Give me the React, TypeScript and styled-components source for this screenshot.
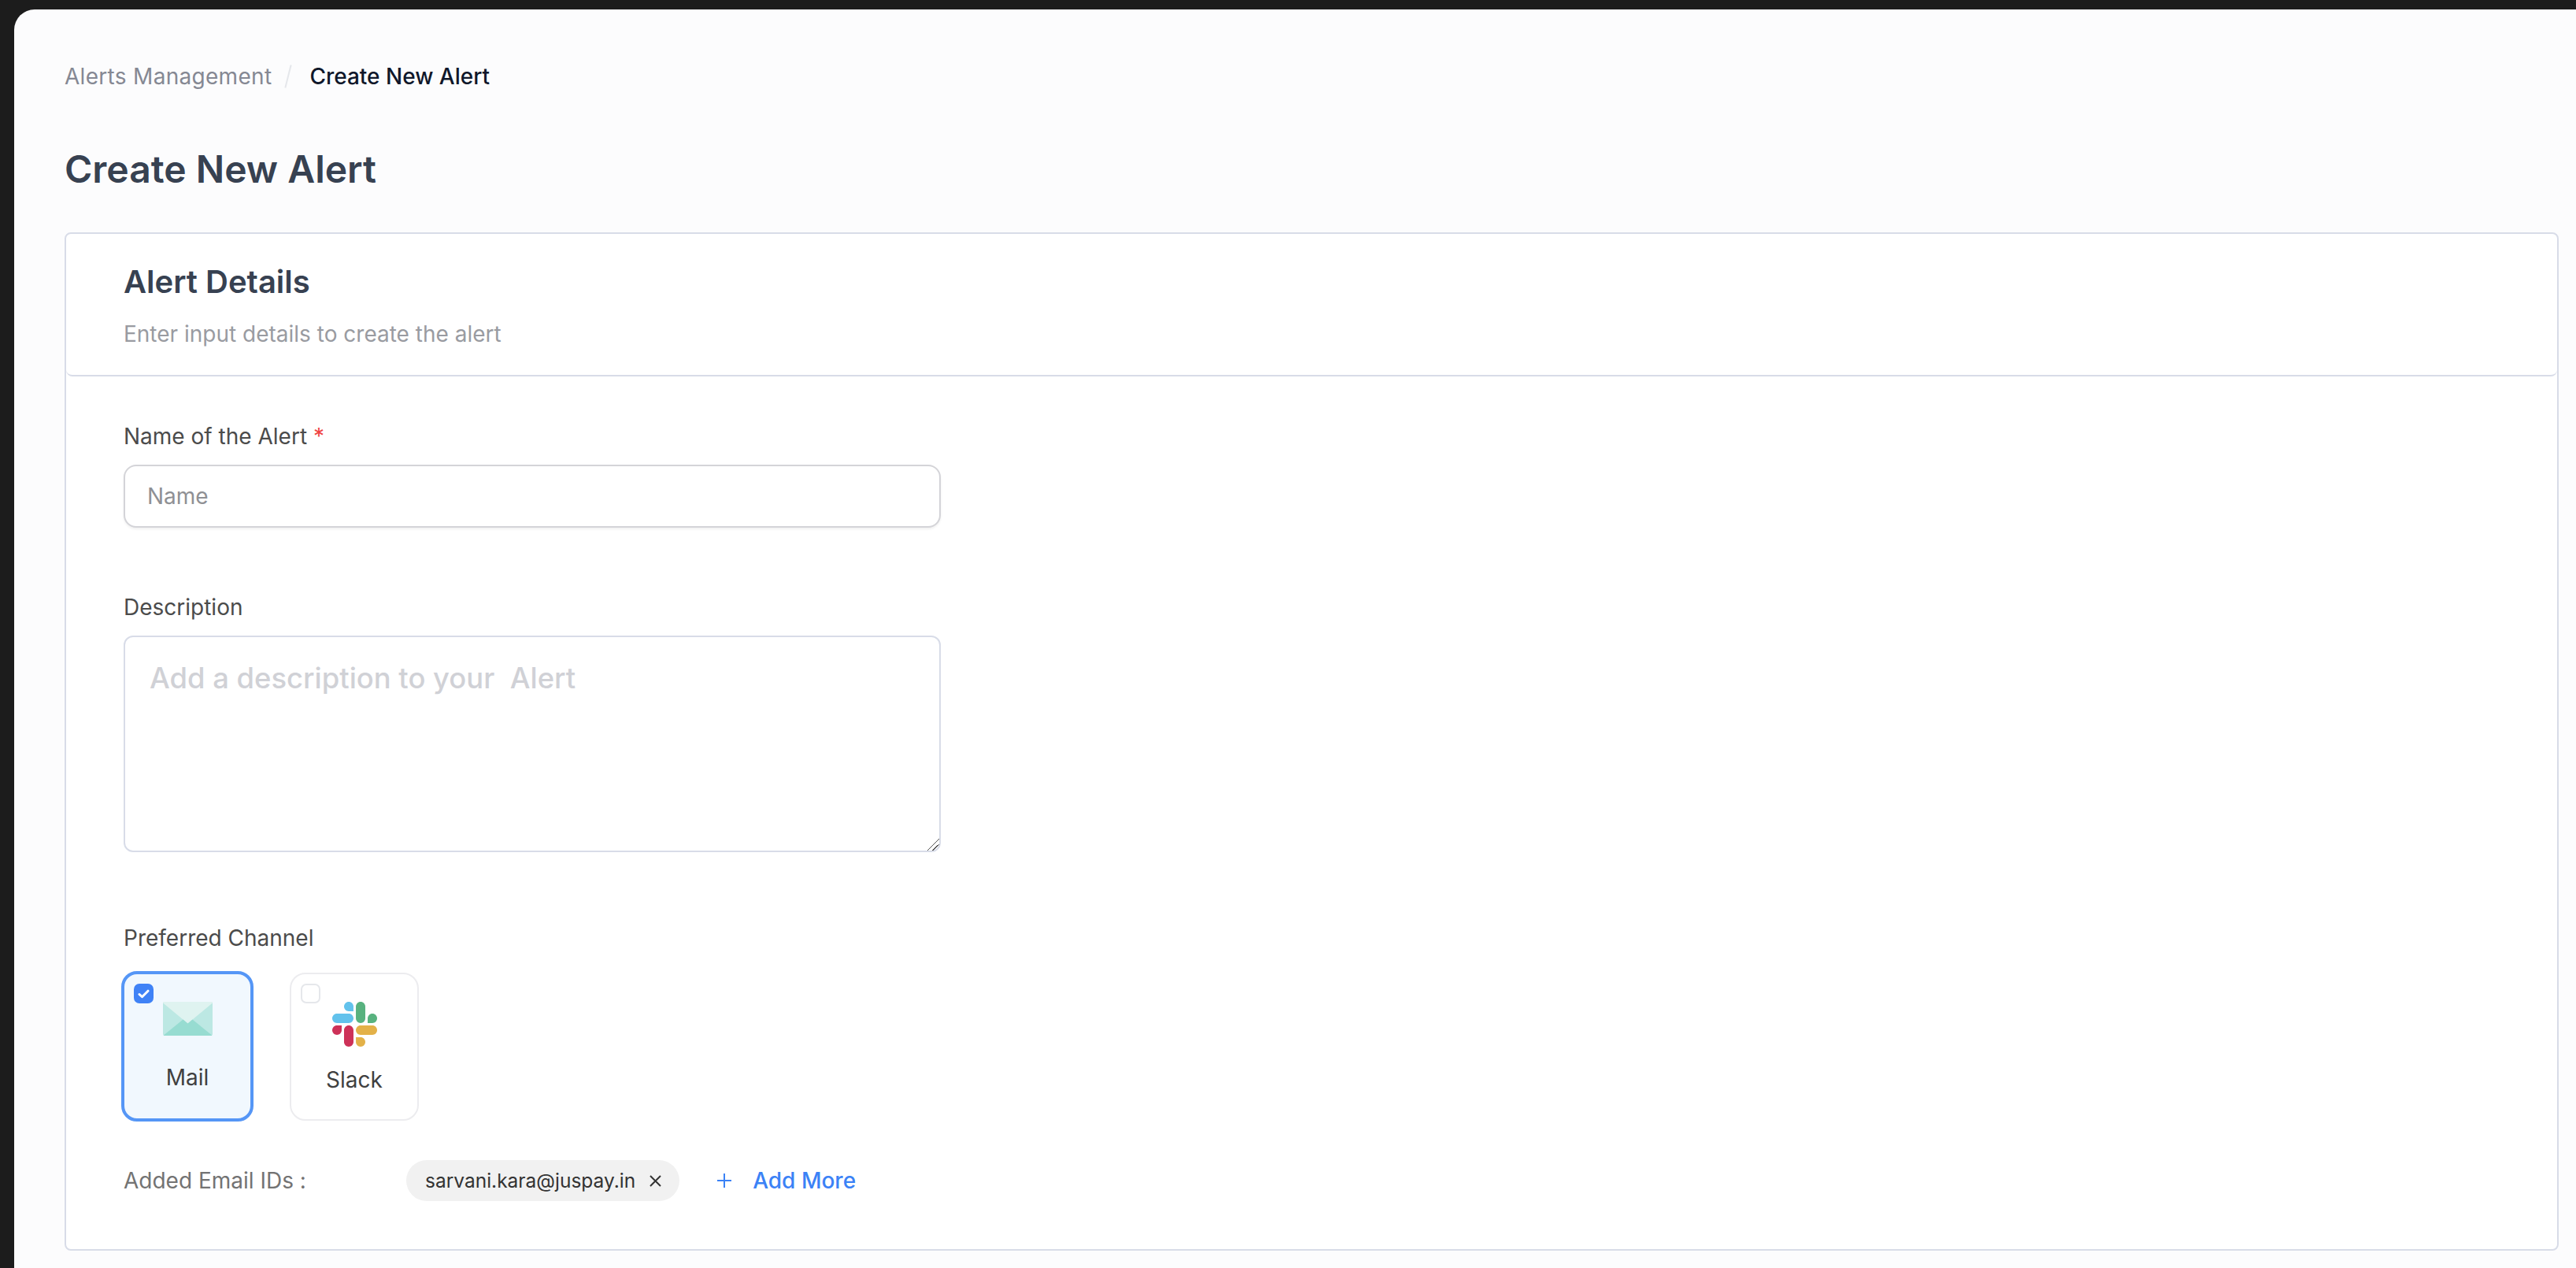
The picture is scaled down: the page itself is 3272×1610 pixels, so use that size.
import { createGlobalStyle, styled } from "styled-components";

const GlobalStyle = createGlobalStyle`
  html, body {
    margin: 0;
    padding: 0;
    background: #1c1c1c;
    font-family: Inter, "Noto Sans", sans-serif;
  }
  * {
    box-sizing: border-box;
  }
`;

const MailIcon = () => (
  <svg width="63" height="43" viewBox="0 0 63 43">
    <rect width="63" height="43" rx="2" fill="#bce8e3" />
    <path d="M1 0h61a1 1 0 0 1 .6 1.8L31.5 27.500 .4 1.800A1 1 0 0 1 1 0z" fill="#dff3f0" />
    <path d="M31.500 27.500l-6-5L.8 42.400c.3.400.7.600 1.200.600h59c.5 0 .9-.2 1.200-.6L37.500 22.500z" fill="#97dcd1" />
  </svg>
);

const SlackIcon = () => (
  <svg width="57" height="57" viewBox="0 0 122.800 122.800">
    <path d="M25.800 77.600c0 7.100-5.800 12.900-12.900 12.900S0 84.700 0 77.600s5.800-12.900 12.900-12.900h12.900v12.900z" fill="#cd3158" />
    <path d="M32.300 77.600c0-7.100 5.800-12.900 12.900-12.900s12.900 5.800 12.900 12.900v32.300c0 7.100-5.800 12.900-12.900 12.900s-12.900-5.800-12.900-12.900V77.600z" fill="#cd3158" />
    <path d="M45.200 25.800c-7.100 0-12.900-5.800-12.900-12.900S38.100 0 45.200 0s12.900 5.800 12.900 12.900v12.900H45.200z" fill="#62c2ec" />
    <path d="M45.200 32.300c7.100 0 12.900 5.800 12.900 12.900s-5.800 12.900-12.900 12.900H12.900C5.800 58.100 0 52.300 0 45.200s5.800-12.900 12.900-12.900h32.300z" fill="#62c2ec" />
    <path d="M97 45.200c0-7.100 5.800-12.900 12.900-12.900s12.900 5.800 12.900 12.900-5.800 12.900-12.900 12.900H97V45.200z" fill="#58b27f" />
    <path d="M90.500 45.200c0 7.100-5.800 12.900-12.900 12.900s-12.900-5.800-12.900-12.900V12.900C64.700 5.800 70.500 0 77.600 0s12.900 5.800 12.900 12.900v32.300z" fill="#58b27f" />
    <path d="M77.600 97c7.100 0 12.900 5.800 12.900 12.900s-5.800 12.900-12.900 12.900-12.900-5.800-12.900-12.900V97h12.900z" fill="#e3b148" />
    <path d="M77.600 90.500c-7.100 0-12.900-5.800-12.900-12.900s5.800-12.900 12.900-12.900h32.300c7.100 0 12.900 5.800 12.900 12.900s-5.800 12.900-12.900 12.900H77.600z" fill="#e3b148" />
  </svg>
);

const CheckIcon = () => (
  <svg width="15" height="12" viewBox="0 0 15 12" fill="none">
    <path d="M2 6.500l3.500 3.200L13 2.200" stroke="#fff" strokeWidth="3" strokeLinecap="round" strokeLinejoin="round" />
  </svg>
);

const CloseIcon = () => (
  <svg width="17" height="17" viewBox="0 0 17 17" fill="none">
    <path d="M2 2l13 13M15 2L2 15" stroke="#333" strokeWidth="2" />
  </svg>
);

const PlusIcon = () => (
  <svg width="20" height="20" viewBox="0 0 20 20" fill="none">
    <path d="M10 1v18M1 10h18" stroke="#3b82f6" strokeWidth="2" />
  </svg>
);

export default function App() {
  return (
    <>
      <GlobalStyle />
      <Screen>
        <Page>
          <Breadcrumb>
            <Crumb>Alerts Management</Crumb>
            <Slash />
            <Crumb $current>Create New Alert</Crumb>
          </Breadcrumb>
          <PageTitle>Create New Alert</PageTitle>
          <Card>
            <CardHeader>
              <CardTitle>Alert Details</CardTitle>
              <CardSubtitle>Enter input details to create the alert</CardSubtitle>
            </CardHeader>
            <CardBody>
              <Field $gap={19}>
                <Label>
                  Name of the Alert <Required>*</Required>
                </Label>
                <NameInput placeholder="Name" />
              </Field>
              <Field $gap={19} $top={84}>
                <Label>Description</Label>
                <DescriptionInput placeholder="Add a description to your  Alert" />
              </Field>
              <Field $gap={25} $top={92}>
                <Label>Preferred Channel</Label>
                <Channels>
                  <ChannelCard $selected>
                    <ChannelCheck $checked>
                      <CheckIcon />
                    </ChannelCheck>
                    <ChannelIcon>
                      <MailIcon />
                    </ChannelIcon>
                    <ChannelName $selected>Mail</ChannelName>
                  </ChannelCard>
                  <ChannelCard>
                    <ChannelCheck />
                    <ChannelIcon>
                      <SlackIcon />
                    </ChannelIcon>
                    <ChannelName>Slack</ChannelName>
                  </ChannelCard>
                </Channels>
              </Field>
              <EmailRow>
                <EmailLabel>Added Email IDs :</EmailLabel>
                <EmailChip>
                  sarvani.kara@juspay.in
                  <CloseIcon />
                </EmailChip>
                <AddMore>
                  <PlusIcon />
                  Add More
                </AddMore>
              </EmailRow>
            </CardBody>
          </Card>
        </Page>
      </Screen>
    </>
  );
}

const Screen = styled.div`
  width: 3272px;
  height: 1610px;
  padding: 12px 0 0 18px;
  background: #1c1c1c;
  overflow: hidden;
`;

const Page = styled.main`
  height: 100%;
  padding: 66px 22px 0 64px;
  background: #fcfcfd;
  border-top-left-radius: 26px;
`;

const Breadcrumb = styled.nav`
  display: flex;
  align-items: center;
  height: 38px;
`;

const Crumb = styled.span<{ $current?: boolean }>`
  font-size: 28px;
  font-weight: ${({ $current }) => ($current ? 500 : 400)};
  letter-spacing: ${({ $current }) => ($current ? 0 : 0.3)}px;
  color: ${({ $current }) => ($current ? "#0f172a" : "#858893")};
`;

const Slash = styled.span`
  width: 2px;
  height: 30px;
  margin: 0 26px 0 20px;
  background: #e5e7eb;
  transform: rotate(14deg);
`;

const PageTitle = styled.h1`
  margin: 70px 0 0;
  font-size: 48px;
  line-height: 58px;
  font-weight: 600;
  color: #374151;
`;

const Card = styled.section`
  margin-top: 51px;
  height: 1293px;
  background: #fff;
  border: 2px solid #d8dce8;
  border-radius: 8px;
`;

const CardHeader = styled.header`
  height: 181px;
  padding: 37px 73px 0;
  border-bottom: 2px solid #d8dce8;
  border-radius: 0 0 8px 8px;
`;

const CardTitle = styled.h2`
  margin: 0;
  font-size: 40px;
  line-height: 48px;
  font-weight: 600;
  color: #374151;
`;

const CardSubtitle = styled.p`
  margin: 25px 0 0;
  font-size: 28px;
  line-height: 34px;
  color: #999ba1;
`;

const CardBody = styled.div`
  padding: 59px 73px 0;
`;

const Field = styled.div<{ $gap: number; $top?: number }>`
  display: flex;
  flex-direction: column;
  gap: ${({ $gap }) => $gap}px;
  margin-top: ${({ $top }) => $top ?? 0}px;
`;

const Label = styled.label`
  font-size: 28px;
  line-height: 34px;
  color: #4b4b4b;
`;

const Required = styled.span`
  color: #ef4444;
`;

const NameInput = styled.input`
  width: 1038px;
  height: 80px;
  padding: 0 28px;
  font-family: inherit;
  font-size: 28px;
  background: #fff;
  border: 2px solid #d4d4d8;
  border-radius: 16px;
  box-shadow: 0 2px 3px rgba(0, 0, 0, 0.06);
  outline: none;

  &::placeholder {
    color: #8f9094;
    opacity: 1;
  }
`;

const DescriptionInput = styled.textarea`
  display: block;
  width: 1038px;
  height: 275px;
  padding: 30px 31px;
  font-family: inherit;
  font-size: 36.4px;
  font-weight: 500;
  line-height: 44px;
  background: #fff;
  border: 2px solid #d8dce8;
  border-radius: 12px;
  outline: none;
  white-space: pre-wrap;

  &::placeholder {
    color: #d0d1d6;
    opacity: 1;
  }

  &::-webkit-resizer {
    background: linear-gradient(
      135deg,
      transparent 47%,
      #555 47%,
      #555 53%,
      transparent 53%,
      transparent 70%,
      #555 70%,
      #555 76%,
      transparent 76%
    );
  }
`;

const Channels = styled.div`
  display: flex;
  align-items: center;
  gap: 46px;
  margin-left: -3px;
`;

const ChannelCard = styled.div<{ $selected?: boolean }>`
  position: relative;
  display: flex;
  flex-direction: column;
  align-items: center;
  width: ${({ $selected }) => ($selected ? 168 : 164)}px;
  height: ${({ $selected }) => ($selected ? 191 : 188)}px;
  padding-top: 35px;
  background: ${({ $selected }) => ($selected ? "#f1f8fe" : "#fff")};
  border: ${({ $selected }) => ($selected ? "4px solid #5596f6" : "2px solid #ececef")};
  border-radius: 20px;
`;

const ChannelCheck = styled.span<{ $checked?: boolean }>`
  position: absolute;
  top: 12px;
  left: 12px;
  display: flex;
  align-items: center;
  justify-content: center;
  width: 25px;
  height: 25px;
  background: ${({ $checked }) => ($checked ? "#3f82f6" : "#fff")};
  border: ${({ $checked }) => ($checked ? "none" : "2px solid #e5e7eb")};
  border-radius: 7px;
`;

const ChannelIcon = styled.div`
  display: flex;
  justify-content: center;
  align-items: flex-start;
  height: 58px;
`;

const ChannelName = styled.span<{ $selected?: boolean }>`
  margin-top: ${({ $selected }) => ($selected ? 21 : 24)}px;
  font-size: 28px;
  line-height: 34px;
  color: #404040;
`;

const EmailRow = styled.div`
  display: flex;
  align-items: center;
  margin-top: 49px;
`;

const EmailLabel = styled.span`
  width: 359px;
  font-size: 28px;
  color: #737373;
`;

const EmailChip = styled.span`
  display: inline-flex;
  align-items: center;
  gap: 17px;
  height: 52px;
  padding: 0 22px 0 24px;
  font-size: 24.5px;
  color: #333;
  background: #f1f1f1;
  border-radius: 26px;
`;

const AddMore = styled.button`
  display: inline-flex;
  align-items: center;
  gap: 26px;
  margin-left: 47px;
  padding: 0;
  font-family: inherit;
  font-size: 28px;
  font-weight: 500;
  color: #3b82f6;
  background: none;
  border: none;
`;
